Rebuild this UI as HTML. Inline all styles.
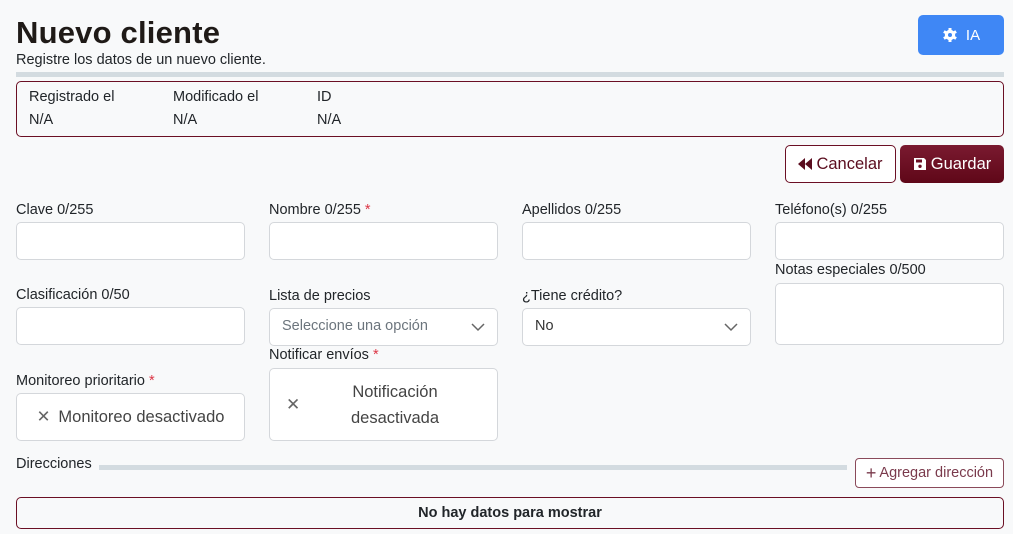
<!DOCTYPE html>
<html><head><meta charset="utf-8"><style>
*{box-sizing:border-box;margin:0;padding:0}
body{width:1013px;height:534px;background:#f8f9fa;font-family:"Liberation Sans",sans-serif;color:#212529;position:relative;overflow:hidden}
.a{position:absolute}
.lbl{position:absolute;font-size:14.5px;color:#212529}
.req{color:#dc3545}
.inp{position:absolute;width:229px;height:38px;background:#fff;border:1px solid #d4d7db;border-radius:5px}
.sel{font-size:14.5px;color:#555;padding:9px 12px}
.chev{position:absolute;right:12px;top:11px;width:14px;height:14px}
</style></head><body>
<div class="a" style="left:16px;top:15px;font-size:31px;color:#1f1a17;font-weight:bold;letter-spacing:0.2px">Nuevo cliente</div>
<div class="a" style="left:16px;top:52px;font-size:14.5px">Registre los datos de un nuevo cliente.</div>
<div class="a" style="left:918px;top:15px;width:86px;height:40px;background:#3f87f5;border-radius:5px;color:#fff;font-size:15px;display:flex;align-items:center;justify-content:center;gap:8px">
<svg width="16" height="16" viewBox="0 0 16 16"><circle cx="8" cy="8" r="5.2" fill="#fff"/><g stroke="#fff" stroke-width="3"><line x1="8" y1="1" x2="8" y2="15"/><line x1="1.9" y1="4.5" x2="14.1" y2="11.5"/><line x1="1.9" y1="11.5" x2="14.1" y2="4.5"/></g><circle cx="8" cy="8" r="2" fill="#3f87f5"/></svg>IA</div>
<div class="a" style="left:16px;top:72px;width:988px;height:5px;background:#d3dbe0"></div>
<div class="a" style="left:16px;top:81px;width:988px;height:56px;border:1px solid #6b0f24;border-radius:5px;font-size:14.5px">
<div class="a" style="left:12px;top:7px">Registrado el</div><div class="a" style="left:12px;top:30px">N/A</div>
<div class="a" style="left:156px;top:7px">Modificado el</div><div class="a" style="left:156px;top:30px">N/A</div>
<div class="a" style="left:300px;top:7px">ID</div><div class="a" style="left:300px;top:30px">N/A</div>
</div>
<div class="a" style="left:785px;top:145px;width:111px;height:38px;border:1px solid #6b0f24;border-radius:5px;color:#5a0c1e;font-size:16.5px;display:flex;align-items:center;justify-content:center;gap:3px;background:#fff">
<svg width="15" height="12" viewBox="0 0 15 12"><path d="M7 0V12L0 6Z M14 0V12L7 6Z" fill="#5a0c1e"/></svg>Cancelar</div>
<div class="a" style="left:900px;top:145px;width:104px;height:38px;background:linear-gradient(#7a1a30,#5f0718);border-radius:5px;color:#fff;font-size:16.5px;display:flex;align-items:center;justify-content:center;gap:4px">
<svg width="14" height="14" viewBox="0 0 14 14"><path d="M1 1H11L13 3V13H1Z" fill="#fff"/><rect x="3" y="2.5" width="6" height="3" fill="#6a0f24"/><circle cx="7" cy="9.3" r="1.7" fill="#6a0f24"/></svg>Guardar</div>

<div class="lbl" style="left:16px;top:202px">Clave 0/255</div><div class="inp" style="left:16px;top:222px"></div>
<div class="lbl" style="left:269px;top:202px">Nombre 0/255 <span class="req">*</span></div><div class="inp" style="left:269px;top:222px"></div>
<div class="lbl" style="left:522px;top:202px">Apellidos 0/255</div><div class="inp" style="left:522px;top:222px"></div>
<div class="lbl" style="left:775px;top:202px">Teléfono(s) 0/255</div><div class="inp" style="left:775px;top:222px"></div>

<div class="lbl" style="left:16px;top:287px">Clasificación 0/50</div><div class="inp" style="left:16px;top:307px"></div>
<div class="lbl" style="left:269px;top:288px">Lista de precios</div><div class="inp sel" style="left:269px;top:308px;color:#6c757d">Seleccione una opción<svg class="chev" viewBox="0 0 14 14"><path d="M1 4L7 10L13 4" fill="none" stroke="#666" stroke-width="1.5"/></svg></div>
<div class="lbl" style="left:522px;top:288px">¿Tiene crédito?</div><div class="inp sel" style="left:522px;top:308px;color:#333">No<svg class="chev" viewBox="0 0 14 14"><path d="M1 4L7 10L13 4" fill="none" stroke="#666" stroke-width="1.5"/></svg></div>
<div class="lbl" style="left:775px;top:262px">Notas especiales 0/500</div><div class="inp" style="left:775px;top:283px;height:62px"></div>

<div class="lbl" style="left:269px;top:347px">Notificar envíos <span class="req">*</span></div>
<div class="inp" style="left:269px;top:368px;height:73px;font-size:16.5px;color:#444">
<div class="a" style="left:16px;top:26px;font-size:17px;color:#666">✕</div>
<div class="a" style="left:55px;top:10px;width:140px;text-align:center;line-height:26px">Notificación desactivada</div></div>
<div class="lbl" style="left:16px;top:373px">Monitoreo prioritario <span class="req">*</span></div>
<div class="inp" style="left:16px;top:393px;height:48px;font-size:16.5px;color:#444;display:flex;align-items:center;justify-content:center;gap:8px"><span style="color:#666">✕</span>Monitoreo desactivado</div>

<div class="lbl" style="left:16px;top:456px">Direcciones</div>
<div class="a" style="left:99px;top:465px;width:748px;height:5px;background:#d3dbe0"></div>
<div class="a" style="left:855px;top:458px;width:149px;height:30px;border:1px solid #8a4a5a;border-radius:4px;color:#7a3a4c;font-size:14.5px;display:flex;align-items:center;justify-content:center;background:#fff"><span style="font-size:18px;margin-right:3px">+</span>Agregar dirección</div>
<div class="a" style="left:16px;top:497px;width:988px;height:32px;border:1px solid #6b0f24;border-radius:5px;font-size:14.5px;font-weight:bold;text-align:center;line-height:30px">No hay datos para mostrar</div>
</body></html>
